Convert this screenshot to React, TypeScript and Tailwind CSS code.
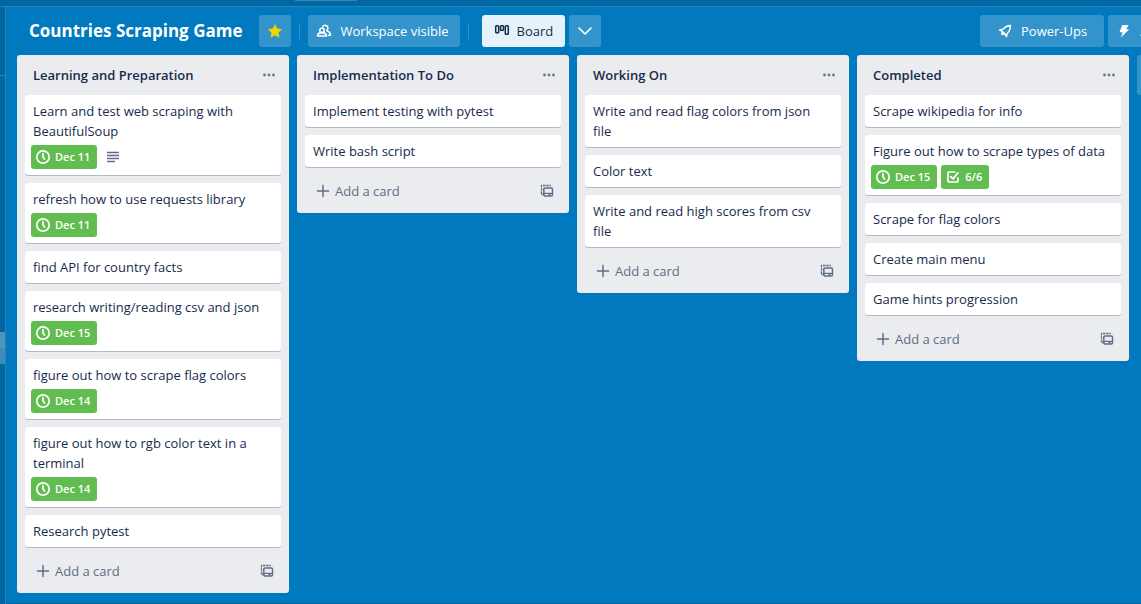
import React from "react";

type CardData = { title: string; due?: string; description?: boolean; checklist?: string };
type ListData = { title: string; cards: CardData[] };

const lists: ListData[] = [
  {
    title: "Learning and Preparation",
    cards: [
      { title: "Learn and test web scraping with BeautifulSoup", due: "Dec 11", description: true },
      { title: "refresh how to use requests library", due: "Dec 11" },
      { title: "find API for country facts" },
      { title: "research writing/reading csv and json", due: "Dec 15" },
      { title: "figure out how to scrape flag colors", due: "Dec 14" },
      { title: "figure out how to rgb color text in a terminal", due: "Dec 14" },
      { title: "Research pytest" },
    ],
  },
  {
    title: "Implementation To Do",
    cards: [{ title: "Implement testing with pytest" }, { title: "Write bash script" }],
  },
  {
    title: "Working On",
    cards: [
      { title: "Write and read flag colors from json file" },
      { title: "Color text" },
      { title: "Write and read high scores from csv file" },
    ],
  },
  {
    title: "Completed",
    cards: [
      { title: "Scrape wikipedia for info" },
      { title: "Figure out how to scrape types of data", due: "Dec 15", checklist: "6/6" },
      { title: "Scrape for flag colors" },
      { title: "Create main menu" },
      { title: "Game hints progression" },
    ],
  },
];

function StarIcon() {
  return (
    <svg className="size-4" viewBox="0 0 16 16" fill="#f2d600" aria-hidden="true">
      <path d="M8 1.500l2 4.300 4.700.6-3.400 3.200.8 4.600L8 12l-4.100 2.200.8-4.600L1.300 6.400l4.700-.6z" stroke="#f2d600" strokeWidth=".5" strokeLinejoin="round" />
    </svg>
  );
}

function PeopleIcon() {
  return (
    <svg className="size-4" viewBox="0 0 16 16" fill="none" stroke="currentColor" strokeWidth="1.600" strokeLinejoin="round" strokeLinecap="round" aria-hidden="true">
      <circle cx="6" cy="7.400" r="2.200" />
      <path d="M1.500 13c.2-2.200 2-3.400 4.500-3.400s4.300 1.200 4.500 3.400z" />
      <path d="M6.700 3.800a2.700 2.700 0 0 1 5.100 1.500c0 1-.4 1.900-1 2.500 2.200.6 3.500 2.300 3.700 4.500h-2" />
    </svg>
  );
}

function BoardIcon() {
  return (
    <svg className="size-4" viewBox="0 0 16 16" fill="none" stroke="currentColor" strokeWidth="1.500" aria-hidden="true">
      <rect x="1.700" y="2.700" width="3" height="7" rx=".8" />
      <rect x="6.500" y="2.700" width="3" height="4.500" rx=".8" />
      <rect x="11.300" y="2.700" width="3" height="8.500" rx=".8" />
    </svg>
  );
}

function ChevronIcon() {
  return (
    <svg className="size-4" viewBox="0 0 16 16" fill="none" stroke="currentColor" strokeWidth="1.600" strokeLinecap="round" strokeLinejoin="round" aria-hidden="true">
      <path d="M2 5l6 6 6-6" />
    </svg>
  );
}

function RocketIcon() {
  return (
    <svg className="size-4" viewBox="0 0 16 16" fill="none" stroke="currentColor" strokeWidth="1.400" strokeLinejoin="round" strokeLinecap="round" aria-hidden="true">
      <path d="M13.500 2.500c-3 .2-5.200 1-7 3.400L2.500 7.200l3 1.200 2.600 2.500 1.200 2.900 1.300-3.700c1.900-1.800 2.800-4.100 2.900-7.600z" />
      <path d="M5.400 8.500l-.7 2.700 3.300-.2" />
    </svg>
  );
}

function BoltIcon() {
  return (
    <svg className="size-4" viewBox="0 0 16 16" fill="currentColor" aria-hidden="true">
      <path d="M6.200 2h6.300l-2.300 4.300h3L5 14.500l1.600-5.200H3.500z" />
    </svg>
  );
}

function ClockIcon() {
  return (
    <svg className="size-4" viewBox="0 0 16 16" fill="none" stroke="currentColor" strokeWidth="1.700" strokeLinecap="round" strokeLinejoin="round" aria-hidden="true">
      <circle cx="8" cy="8" r="6.200" />
      <path d="M8 4.500V8l1.500 2" />
    </svg>
  );
}

function CheckIcon() {
  return (
    <svg className="size-4" viewBox="0 0 16 16" fill="none" stroke="currentColor" strokeWidth="1.700" strokeLinecap="round" strokeLinejoin="round" aria-hidden="true">
      <path d="M9.800 3H4a1 1 0 0 0-1 1v8a1 1 0 0 0 1 1h8a1 1 0 0 0 1-1V8.800" />
      <path d="M5.700 7.600L8 9.900l5-6" />
    </svg>
  );
}

function DescriptionIcon() {
  return (
    <svg className="size-4" viewBox="0 0 16 16" fill="none" stroke="currentColor" strokeWidth="1.300" aria-label="This card has a description" role="img">
      <path d="M2 3.500h12M2 6.500h12M2 9.500h12M2 12.500h8" />
    </svg>
  );
}

function DotsIcon() {
  return (
    <svg className="size-4" viewBox="0 0 16 16" fill="currentColor" aria-hidden="true">
      <circle cx="3.500" cy="8" r="1.400" />
      <circle cx="8" cy="8" r="1.400" />
      <circle cx="12.500" cy="8" r="1.400" />
    </svg>
  );
}

function PlusIcon() {
  return (
    <svg className="size-4" viewBox="0 0 16 16" fill="none" stroke="currentColor" strokeWidth="1.500" strokeLinecap="round" aria-hidden="true">
      <path d="M8 2.500v11M2.500 8h11" />
    </svg>
  );
}

function TemplateIcon() {
  return (
    <svg className="size-4" viewBox="0 0 16 16" fill="none" stroke="currentColor" aria-hidden="true">
      <path d="M2.500 11V2.500H12" strokeWidth="1.300" strokeDasharray="2.500 .8" />
      <path d="M2.500 11.500h2" strokeWidth="1.300" />
      <rect x="4.800" y="4.900" width="8.700" height="8" rx="1.200" strokeWidth="1.500" />
      <path d="M5 10.400h8.500" strokeWidth="1.200" />
      <path d="M9.500 11.700h2" strokeWidth="1.400" />
    </svg>
  );
}

function Badge({ icon, text }: { icon: React.ReactNode; text: string }) {
  return (
    <span className="flex h-6 items-center gap-1 rounded-[3px] bg-[#61bd4f] pl-1 pr-[7px] text-[11px] font-semibold text-white">
      {icon}
      {text}
    </span>
  );
}

function Card({ card }: { card: CardData }) {
  return (
    <li className="rounded-[3px] bg-white px-2 py-[6px] shadow-[0_1px_0_#091e4240]">
      <a href="#card" className="block pr-1">{card.title}</a>
      {card.due && (
        <div className="-mx-[2px] mt-1 flex items-center gap-1">
          <Badge icon={<ClockIcon />} text={card.due} />
          {card.checklist && <Badge icon={<CheckIcon />} text={card.checklist} />}
          {card.description && <span className="px-1 text-[#5e6c84]"><DescriptionIcon /></span>}
        </div>
      )}
    </li>
  );
}

function List({ list }: { list: ListData }) {
  return (
    <section className="w-68 shrink-0 rounded-[3px] bg-[#ebecf0] px-2 pb-[6px] text-[#172b4d]">
      <div className="flex h-10 items-center justify-between pl-2 pr-1">
        <h2 className="font-semibold">{list.title}</h2>
        <button type="button" aria-label={"Actions for " + list.title} className="text-[#6b778c]"><DotsIcon /></button>
      </div>
      <ul className="flex flex-col gap-2">
        {list.cards.map((card) => <Card key={card.title} card={card} />)}
      </ul>
      <div className="mt-2 flex h-8 items-center justify-between pl-[10px] pr-[6px] text-[#5e6c84]">
        <button type="button" className="flex items-center gap-1"><PlusIcon />Add a card</button>
        <button type="button" aria-label="Create from template"><TemplateIcon /></button>
      </div>
    </section>
  );
}

const headerButton = "flex h-8 shrink-0 items-center rounded-[3px] bg-[#3394cc] whitespace-nowrap font-medium text-white";

export default function App() {
  return (
    <div className="flex h-screen flex-col overflow-hidden bg-[#0079bf] font-['Open_Sans','Noto_Sans',sans-serif] text-[13px] leading-5">
      <div className="h-[7px] shrink-0 border-b border-[#2684b9] bg-[#0067a3] pl-[295px]">
        <div className="h-px w-[62px] bg-[#3388b9]" />
      </div>
      <div className="flex min-h-0 flex-1">
        <aside className="flex w-[6px] shrink-0 flex-col border-r border-[#2684b9] bg-[#0067a3]">
          <div className="h-[69px] border-b border-[#2684b9]" />
          <div className="mt-64 h-4 bg-[#4d95bf]" />
          <div className="h-4 bg-[#3d8cba]" />
        </aside>
        <main className="flex min-w-0 flex-1 flex-col border-b border-[#0067a3]">
          <header className="flex h-12 shrink-0 items-center pl-[23px]">
            <h1 className="shrink-0 whitespace-nowrap text-[17px] font-bold text-white">Countries Scraping Game</h1>
            <button type="button" aria-label="Star board" className={`${headerButton} ml-[17px] w-8 justify-center`}><StarIcon /></button>
            <span className="mx-2 h-4 w-px shrink-0 bg-[#3394cc]" />
            <button type="button" className={`${headerButton} gap-2 pl-2 pr-3`}><PeopleIcon />Workspace visible</button>
            <span className="ml-2 mr-[13px] h-4 w-px shrink-0 bg-[#3394cc]" />
            <button type="button" className="flex h-8 shrink-0 items-center gap-[6px] rounded-[3px] bg-[#e6f2f9] px-3 text-[#172b4d]"><BoardIcon />Board</button>
            <button type="button" aria-label="Switch view" className={`${headerButton} ml-1 w-8 justify-center`}><ChevronIcon /></button>
            <div className="ml-auto flex w-[161px] shrink-0 gap-1">
              <button type="button" className={`${headerButton} gap-2 pl-[17px] pr-[17px]`}><RocketIcon />Power-Ups</button>
              <button type="button" className={`${headerButton} gap-2 px-2`}><BoltIcon />Automation</button>
            </div>
          </header>
          <div className="flex min-h-0 flex-1 items-start gap-2 pl-[11px]">
            {lists.map((list) => <List key={list.title} list={list} />)}
            <button type="button" aria-label="Add another list" className="flex h-10 w-68 shrink-0 items-center rounded-[3px] bg-[#3394cc] px-3 text-white"><PlusIcon /></button>
          </div>
        </main>
      </div>
    </div>
  );
}
